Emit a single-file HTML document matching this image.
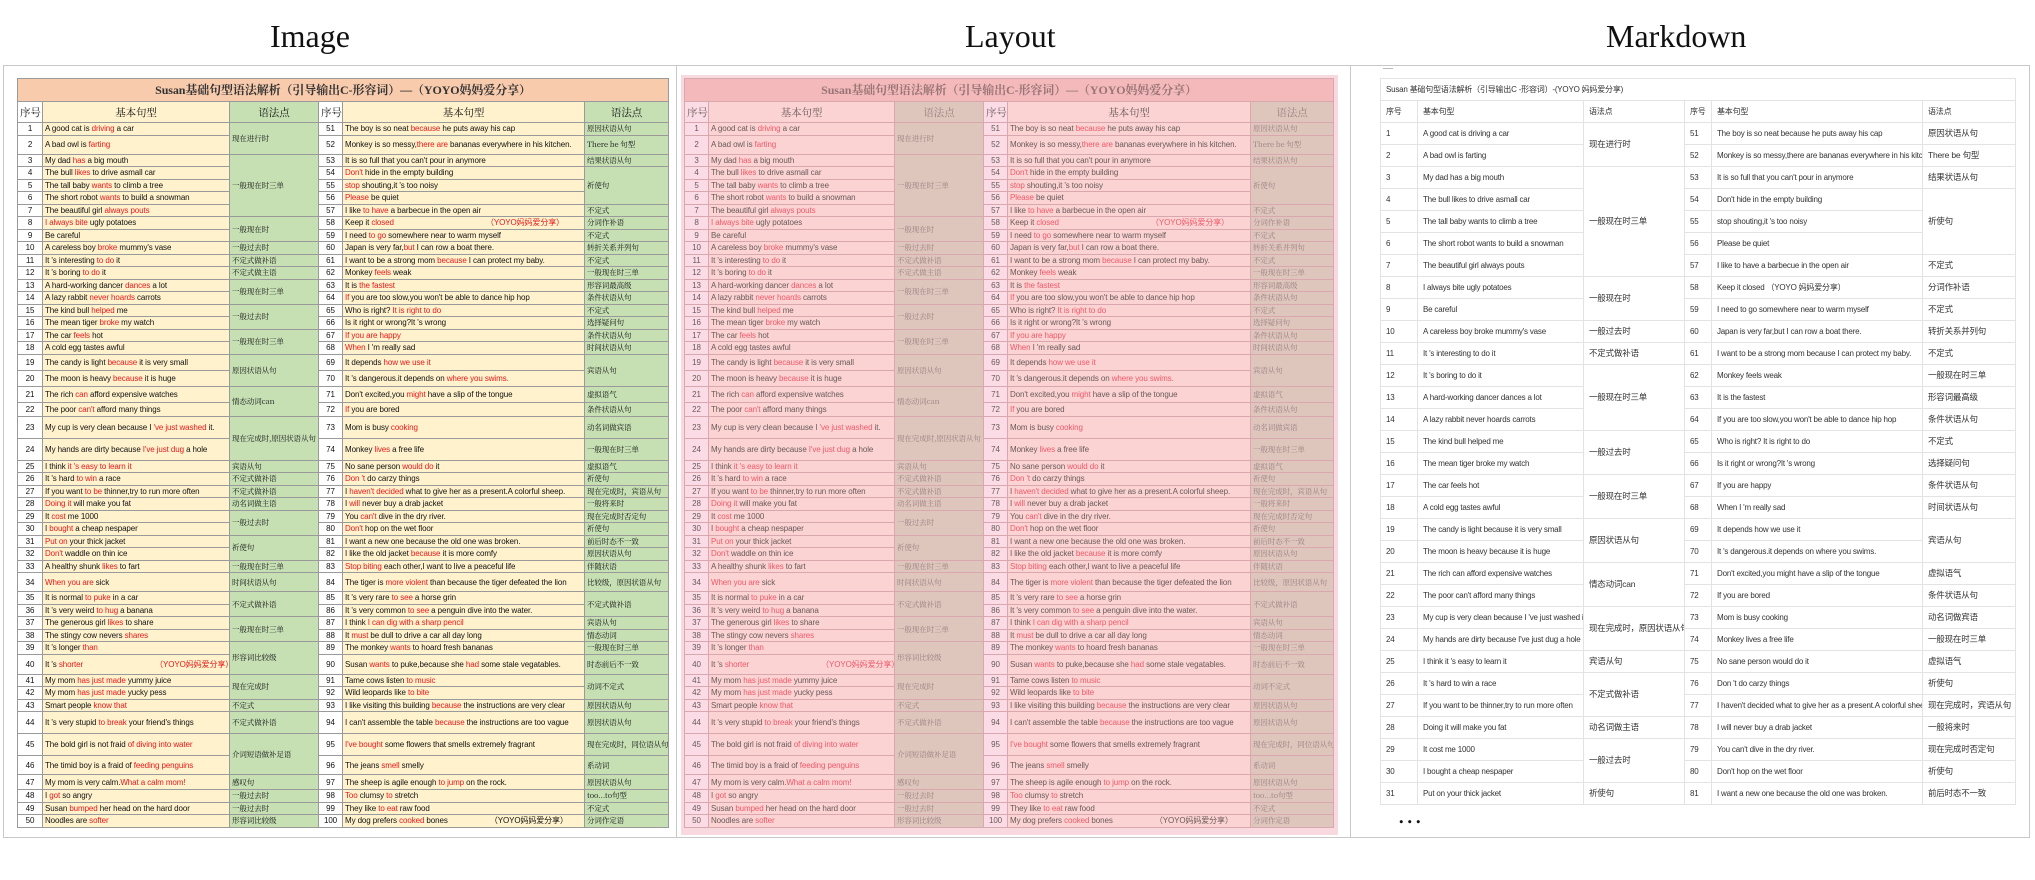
<!DOCTYPE html>
<html><head><meta charset="utf-8">
<style>
*{margin:0;padding:0;box-sizing:border-box}
body{width:2035px;height:880px;background:#fff;position:relative;overflow:hidden;font-family:"Liberation Sans","Noto Sans CJK SC",sans-serif}
.h{position:absolute;top:18px;font-family:"Liberation Serif","Noto Serif CJK SC",serif;font-size:32px;color:#111}
.panel{position:absolute;top:65px;height:773px;border:1px solid #c8c8c8;background:#fff}
table{border-collapse:collapse;table-layout:fixed;position:absolute}
td{overflow:hidden;white-space:nowrap;font-size:8px;line-height:9px;padding:0 2px;vertical-align:middle;letter-spacing:-0.1px}
b{font-weight:normal;color:#e8191b}
.t1 td{border:1px solid #9a9a9a;color:#111}
.t1 .ti{background:#f8cbad;text-align:center;font-size:12px;font-weight:bold;font-family:"Liberation Serif","Noto Serif CJK SC",serif;color:#333}
.t1 .n{background:#fff;text-align:center}
.t1 .s{background:#fff2cc}
.t1 .g{background:#c6e0b4;font-family:"Noto Serif CJK SC",serif;font-size:7.5px}
.t1 .hd{text-align:center;font-size:10.5px;font-family:"Noto Serif CJK SC",serif}
.t2 td{border:1px solid #d9a8ae;color:#6a5a5a}
.t2 b{color:#f05a6a}
.t2 .ti{background:#f3b9bb;text-align:center;font-size:12px;font-weight:bold;font-family:"Liberation Serif","Noto Serif CJK SC",serif;color:#9a7575}
.t2 .n{background:#fadbe6;text-align:center}
.t2 .s{background:#fbd3d3}
.t2 .g{background:#dfc6bd;font-family:"Noto Serif CJK SC",serif;font-size:7.5px;color:#9a8080}
.t2 .hd{text-align:center;font-size:10.5px;font-family:"Noto Serif CJK SC",serif}
.t3 td{border:1px solid #e3e3e3;color:#333;font-size:8px;padding:0 5px;height:22px;letter-spacing:-0.2px}
.t3 .g{font-size:8.5px}
</style></head><body>
<div class="h" style="left:270px">Image</div>
<div class="h" style="left:965px">Layout</div>
<div class="h" style="left:1606px">Markdown</div>

<div class="panel" style="left:3px;width:674px"></div>
<div class="panel" style="left:676px;width:675px"></div>
<div class="panel" style="left:1350px;width:680px"></div>
<div style="position:absolute;left:681px;top:75px;width:657px;height:760px;background:#f9d9e0"></div>

<table class="t1" style="left:17px;top:78px;width:651px">
<colgroup><col style="width:25px"><col style="width:187px"><col style="width:89px"><col style="width:24px"><col style="width:242px"><col style="width:84px"></colgroup>
<tr style="height:23px"><td class="ti" colspan="6">Susan基础句型语法解析（引导输出C-形容词）—（YOYO妈妈爱分享）</td></tr>
<tr style="height:21px"><td class="n hd">序号</td><td class="s hd">基本句型</td><td class="g hd">语法点</td><td class="n hd">序号</td><td class="s hd">基本句型</td><td class="g hd">语法点</td></tr>
<tr style="height:12.5px"><td class="n">1</td><td class="s">A good cat is <b>driving</b> a car</td><td class="g" rowspan="2">现在进行时</td><td class="n">51</td><td class="s">The boy is so neat <b>because</b> he puts away his cap</td><td class="g">原因状语从句</td></tr>
<tr style="height:19px"><td class="n">2</td><td class="s">A bad owl is <b>farting</b></td><td class="n">52</td><td class="s">Monkey is so messy,<b>there are</b> bananas everywhere in his kitchen.</td><td class="g">There be 句型</td></tr>
<tr style="height:12.5px"><td class="n">3</td><td class="s">My dad <b>has</b> a big mouth</td><td class="g" rowspan="5">一般现在时三单</td><td class="n">53</td><td class="s">It is so full that you can't pour in anymore</td><td class="g">结果状语从句</td></tr>
<tr style="height:12.5px"><td class="n">4</td><td class="s">The bull <b>likes</b> to drive asmall car</td><td class="n">54</td><td class="s"><b>Don't</b> hide in the empty building</td><td class="g" rowspan="3">祈使句</td></tr>
<tr style="height:12.5px"><td class="n">5</td><td class="s">The tall baby <b>wants</b> to climb a tree</td><td class="n">55</td><td class="s"><b>stop</b> shouting,it 's too noisy</td></tr>
<tr style="height:12.5px"><td class="n">6</td><td class="s">The short robot <b>wants</b> to build a snowman</td><td class="n">56</td><td class="s"><b>Please</b> be quiet</td></tr>
<tr style="height:12.5px"><td class="n">7</td><td class="s">The beautiful girl <b>always pouts</b></td><td class="n">57</td><td class="s">I like <b>to have</b> a barbecue in the open air</td><td class="g">不定式</td></tr>
<tr style="height:12.5px"><td class="n">8</td><td class="s"><b>I always bite</b> ugly potatoes</td><td class="g" rowspan="2">一般现在时</td><td class="n">58</td><td class="s">Keep it <b>closed</b> <span style="margin-left:90px;color:#e8191b">（YOYO妈妈爱分享）</span></td><td class="g">分词作补语</td></tr>
<tr style="height:12.5px"><td class="n">9</td><td class="s">Be careful</td><td class="n">59</td><td class="s">I need <b>to go</b> somewhere near to warm myself</td><td class="g">不定式</td></tr>
<tr style="height:12.5px"><td class="n">10</td><td class="s">A careless boy <b>broke</b> mummy's vase</td><td class="g">一般过去时</td><td class="n">60</td><td class="s">Japan is very far,<b>but</b> I can row a boat there.</td><td class="g">转折关系并列句</td></tr>
<tr style="height:12.5px"><td class="n">11</td><td class="s">It 's interesting <b>to do</b> it</td><td class="g">不定式做补语</td><td class="n">61</td><td class="s">I want to be a strong mom <b>because</b> I can protect my baby.</td><td class="g">不定式</td></tr>
<tr style="height:12.5px"><td class="n">12</td><td class="s">It 's boring <b>to do</b> it</td><td class="g">不定式做主语</td><td class="n">62</td><td class="s">Monkey <b>feels</b> weak</td><td class="g">一般现在时三单</td></tr>
<tr style="height:12.5px"><td class="n">13</td><td class="s">A hard-working dancer <b>dances</b> a lot</td><td class="g" rowspan="2">一般现在时三单</td><td class="n">63</td><td class="s">It is <b>the fastest</b></td><td class="g">形容词最高级</td></tr>
<tr style="height:12.5px"><td class="n">14</td><td class="s">A lazy rabbit <b>never hoards</b> carrots</td><td class="n">64</td><td class="s"><b>If</b> you are too slow,you won't be able to dance hip hop</td><td class="g">条件状语从句</td></tr>
<tr style="height:12.5px"><td class="n">15</td><td class="s">The kind bull <b>helped</b> me</td><td class="g" rowspan="2">一般过去时</td><td class="n">65</td><td class="s">Who is right? <b>It is right to do</b></td><td class="g">不定式</td></tr>
<tr style="height:12.5px"><td class="n">16</td><td class="s">The mean tiger <b>broke</b> my watch</td><td class="n">66</td><td class="s">Is it right or wrong?It 's wrong</td><td class="g">选择疑问句</td></tr>
<tr style="height:12.5px"><td class="n">17</td><td class="s">The car <b>feels</b> hot</td><td class="g" rowspan="2">一般现在时三单</td><td class="n">67</td><td class="s"><b>If you are happy</b></td><td class="g">条件状语从句</td></tr>
<tr style="height:12.5px"><td class="n">18</td><td class="s">A cold egg tastes awful</td><td class="n">68</td><td class="s"><b>When</b> I 'm really sad</td><td class="g">时间状语从句</td></tr>
<tr style="height:16px"><td class="n">19</td><td class="s">The candy is light <b>because</b> it is very small</td><td class="g" rowspan="2">原因状语从句</td><td class="n">69</td><td class="s">It depends <b>how we use it</b></td><td class="g" rowspan="2">宾语从句</td></tr>
<tr style="height:16px"><td class="n">20</td><td class="s">The moon is heavy <b>because</b> it is huge</td><td class="n">70</td><td class="s">It 's dangerous.it depends on <b>where you swims.</b></td></tr>
<tr style="height:16px"><td class="n">21</td><td class="s">The rich <b>can</b> afford expensive watches</td><td class="g" rowspan="2">情态动词can</td><td class="n">71</td><td class="s">Don't excited,you <b>might</b> have a slip of the tongue</td><td class="g">虚拟语气</td></tr>
<tr style="height:14px"><td class="n">22</td><td class="s">The poor <b>can't</b> afford many things</td><td class="n">72</td><td class="s"><b>If</b> you are bored</td><td class="g">条件状语从句</td></tr>
<tr style="height:22px"><td class="n">23</td><td class="s">My cup is very clean because I <b>'ve just washed</b> it.</td><td class="g" rowspan="2">现在完成时,原因状语从句</td><td class="n">73</td><td class="s">Mom is busy <b>cooking</b></td><td class="g">动名词做宾语</td></tr>
<tr style="height:22px"><td class="n">24</td><td class="s">My hands are dirty because <b>I've just dug</b> a hole</td><td class="n">74</td><td class="s">Monkey <b>lives</b> a free life</td><td class="g">一般现在时三单</td></tr>
<tr style="height:12.5px"><td class="n">25</td><td class="s">I think <b>it 's easy to learn it</b></td><td class="g">宾语从句</td><td class="n">75</td><td class="s">No sane person <b>would do</b> it</td><td class="g">虚拟语气</td></tr>
<tr style="height:12.5px"><td class="n">26</td><td class="s">It 's hard <b>to win</b> a race</td><td class="g">不定式做补语</td><td class="n">76</td><td class="s"><b>Don 't</b> do carzy things</td><td class="g">祈使句</td></tr>
<tr style="height:12.5px"><td class="n">27</td><td class="s">If you want <b>to be</b> thinner,try to run more often</td><td class="g">不定式做补语</td><td class="n">77</td><td class="s">I <b>haven't decided</b> what to give her as a present.A colorful sheep.</td><td class="g">现在完成时，宾语从句</td></tr>
<tr style="height:12.5px"><td class="n">28</td><td class="s"><b>Doing it</b> will make you fat</td><td class="g">动名词做主语</td><td class="n">78</td><td class="s">I <b>will</b> never buy a drab jacket</td><td class="g">一般将来时</td></tr>
<tr style="height:12.5px"><td class="n">29</td><td class="s">It <b>cost</b> me 1000</td><td class="g" rowspan="2">一般过去时</td><td class="n">79</td><td class="s">You <b>can't</b> dive in the dry river.</td><td class="g">现在完成时否定句</td></tr>
<tr style="height:12.5px"><td class="n">30</td><td class="s">I <b>bought</b> a cheap nespaper</td><td class="n">80</td><td class="s"><b>Don't</b> hop on the wet floor</td><td class="g">祈使句</td></tr>
<tr style="height:12.5px"><td class="n">31</td><td class="s"><b>Put on</b> your thick jacket</td><td class="g" rowspan="2">祈使句</td><td class="n">81</td><td class="s">I want a new one because the old one was broken.</td><td class="g">前后时态不一致</td></tr>
<tr style="height:12.5px"><td class="n">32</td><td class="s"><b>Don't</b> waddle on thin ice</td><td class="n">82</td><td class="s">I like the old jacket <b>because</b> it is more comfy</td><td class="g">原因状语从句</td></tr>
<tr style="height:12.5px"><td class="n">33</td><td class="s">A healthy shunk <b>likes</b> to fart</td><td class="g">一般现在时三单</td><td class="n">83</td><td class="s"><b>Stop biting</b> each other,I want to live a peaceful life</td><td class="g">伴随状语</td></tr>
<tr style="height:19px"><td class="n">34</td><td class="s"><b>When you are</b> sick</td><td class="g">时间状语从句</td><td class="n">84</td><td class="s">The tiger is <b>more violent</b> than because the tiger defeated the lion</td><td class="g">比较级，原因状语从句</td></tr>
<tr style="height:12.5px"><td class="n">35</td><td class="s">It is normal <b>to puke</b> in a car</td><td class="g" rowspan="2">不定式做补语</td><td class="n">85</td><td class="s">It 's very rare <b>to see</b> a horse grin</td><td class="g" rowspan="2">不定式做补语</td></tr>
<tr style="height:12.5px"><td class="n">36</td><td class="s">It 's very weird <b>to hug</b> a banana</td><td class="n">86</td><td class="s">It 's very common <b>to see</b> a penguin dive into the water.</td></tr>
<tr style="height:12.5px"><td class="n">37</td><td class="s">The generous girl <b>likes</b> to share</td><td class="g" rowspan="2">一般现在时三单</td><td class="n">87</td><td class="s">I think <b>I can dig with a sharp pencil</b></td><td class="g">宾语从句</td></tr>
<tr style="height:12.5px"><td class="n">38</td><td class="s">The stingy cow nevers <b>shares</b></td><td class="n">88</td><td class="s">It <b>must</b> be dull to drive a car all day long</td><td class="g">情态动词</td></tr>
<tr style="height:12.5px"><td class="n">39</td><td class="s">It 's longer <b>than</b></td><td class="g" rowspan="2">形容词比较级</td><td class="n">89</td><td class="s">The monkey <b>wants</b> to hoard fresh bananas</td><td class="g">一般现在时三单</td></tr>
<tr style="height:20px"><td class="n">40</td><td class="s">It 's <b>shorter</b> <span style="margin-left:70px;color:#e8191b">（YOYO妈妈爱分享）</span></td><td class="n">90</td><td class="s">Susan <b>wants</b> to puke,because she <b>had</b> some stale vegatables.</td><td class="g">时态前后不一致</td></tr>
<tr style="height:12.5px"><td class="n">41</td><td class="s">My mom <b>has just made</b> yummy juice</td><td class="g" rowspan="2">现在完成时</td><td class="n">91</td><td class="s">Tame cows listen <b>to music</b></td><td class="g" rowspan="2">动词不定式</td></tr>
<tr style="height:12.5px"><td class="n">42</td><td class="s">My mom <b>has just made</b> yucky pess</td><td class="n">92</td><td class="s">Wild leopards like <b>to bite</b></td></tr>
<tr style="height:12.5px"><td class="n">43</td><td class="s">Smart people <b>know that</b></td><td class="g">不定式</td><td class="n">93</td><td class="s">I like visiting this building <b>because</b> the instructions are very clear</td><td class="g">原因状语从句</td></tr>
<tr style="height:22px"><td class="n">44</td><td class="s">It 's very stupid <b>to break</b> your friend's things</td><td class="g">不定式做补语</td><td class="n">94</td><td class="s">I can't assemble the table <b>because</b> the instructions are too vague</td><td class="g">原因状语从句</td></tr>
<tr style="height:22px"><td class="n">45</td><td class="s">The bold girl is not fraid <b>of diving into water</b></td><td class="g" rowspan="2">介词短语做补足语</td><td class="n">95</td><td class="s"><b>I've bought</b> some flowers that smells extremely fragrant</td><td class="g">现在完成时，同位语从句</td></tr>
<tr style="height:19px"><td class="n">46</td><td class="s">The timid boy is a fraid of <b>feeding penguins</b></td><td class="n">96</td><td class="s">The jeans <b>smell</b> smelly</td><td class="g">系动词</td></tr>
<tr style="height:15px"><td class="n">47</td><td class="s">My mom is very calm.<b>What a calm mom!</b></td><td class="g">感叹句</td><td class="n">97</td><td class="s">The sheep is agile enough <b>to jump</b> on the rock.</td><td class="g">原因状语从句</td></tr>
<tr style="height:12.5px"><td class="n">48</td><td class="s">I <b>got</b> so angry</td><td class="g">一般过去时</td><td class="n">98</td><td class="s"><b>Too</b> clumsy <b>to</b> stretch</td><td class="g">too...to句型</td></tr>
<tr style="height:12.5px"><td class="n">49</td><td class="s">Susan <b>bumped</b> her head on the hard door</td><td class="g">一般过去时</td><td class="n">99</td><td class="s">They like <b>to eat</b> raw food</td><td class="g">不定式</td></tr>
<tr style="height:12.5px"><td class="n">50</td><td class="s">Noodles are <b>softer</b></td><td class="g">形容词比较级</td><td class="n">100</td><td class="s">My dog prefers <b>cooked</b> bones <span style="margin-left:40px">（YOYO妈妈爱分享）</span></td><td class="g">分词作定语</td></tr>
</table>

<table class="t2" style="left:684px;top:78px;width:649px">
<colgroup><col style="width:24px"><col style="width:186px"><col style="width:89px"><col style="width:24px"><col style="width:243px"><col style="width:83px"></colgroup>
<tr style="height:23px"><td class="ti" colspan="6">Susan基础句型语法解析（引导输出C-形容词）—（YOYO妈妈爱分享）</td></tr>
<tr style="height:21px"><td class="n hd">序号</td><td class="s hd">基本句型</td><td class="g hd">语法点</td><td class="n hd">序号</td><td class="s hd">基本句型</td><td class="g hd">语法点</td></tr>
<tr style="height:12.5px"><td class="n">1</td><td class="s">A good cat is <b>driving</b> a car</td><td class="g" rowspan="2">现在进行时</td><td class="n">51</td><td class="s">The boy is so neat <b>because</b> he puts away his cap</td><td class="g">原因状语从句</td></tr>
<tr style="height:19px"><td class="n">2</td><td class="s">A bad owl is <b>farting</b></td><td class="n">52</td><td class="s">Monkey is so messy,<b>there are</b> bananas everywhere in his kitchen.</td><td class="g">There be 句型</td></tr>
<tr style="height:12.5px"><td class="n">3</td><td class="s">My dad <b>has</b> a big mouth</td><td class="g" rowspan="5">一般现在时三单</td><td class="n">53</td><td class="s">It is so full that you can't pour in anymore</td><td class="g">结果状语从句</td></tr>
<tr style="height:12.5px"><td class="n">4</td><td class="s">The bull <b>likes</b> to drive asmall car</td><td class="n">54</td><td class="s"><b>Don't</b> hide in the empty building</td><td class="g" rowspan="3">祈使句</td></tr>
<tr style="height:12.5px"><td class="n">5</td><td class="s">The tall baby <b>wants</b> to climb a tree</td><td class="n">55</td><td class="s"><b>stop</b> shouting,it 's too noisy</td></tr>
<tr style="height:12.5px"><td class="n">6</td><td class="s">The short robot <b>wants</b> to build a snowman</td><td class="n">56</td><td class="s"><b>Please</b> be quiet</td></tr>
<tr style="height:12.5px"><td class="n">7</td><td class="s">The beautiful girl <b>always pouts</b></td><td class="n">57</td><td class="s">I like <b>to have</b> a barbecue in the open air</td><td class="g">不定式</td></tr>
<tr style="height:12.5px"><td class="n">8</td><td class="s"><b>I always bite</b> ugly potatoes</td><td class="g" rowspan="2">一般现在时</td><td class="n">58</td><td class="s">Keep it <b>closed</b> <span style="margin-left:90px;color:#f05a6a">（YOYO妈妈爱分享）</span></td><td class="g">分词作补语</td></tr>
<tr style="height:12.5px"><td class="n">9</td><td class="s">Be careful</td><td class="n">59</td><td class="s">I need <b>to go</b> somewhere near to warm myself</td><td class="g">不定式</td></tr>
<tr style="height:12.5px"><td class="n">10</td><td class="s">A careless boy <b>broke</b> mummy's vase</td><td class="g">一般过去时</td><td class="n">60</td><td class="s">Japan is very far,<b>but</b> I can row a boat there.</td><td class="g">转折关系并列句</td></tr>
<tr style="height:12.5px"><td class="n">11</td><td class="s">It 's interesting <b>to do</b> it</td><td class="g">不定式做补语</td><td class="n">61</td><td class="s">I want to be a strong mom <b>because</b> I can protect my baby.</td><td class="g">不定式</td></tr>
<tr style="height:12.5px"><td class="n">12</td><td class="s">It 's boring <b>to do</b> it</td><td class="g">不定式做主语</td><td class="n">62</td><td class="s">Monkey <b>feels</b> weak</td><td class="g">一般现在时三单</td></tr>
<tr style="height:12.5px"><td class="n">13</td><td class="s">A hard-working dancer <b>dances</b> a lot</td><td class="g" rowspan="2">一般现在时三单</td><td class="n">63</td><td class="s">It is <b>the fastest</b></td><td class="g">形容词最高级</td></tr>
<tr style="height:12.5px"><td class="n">14</td><td class="s">A lazy rabbit <b>never hoards</b> carrots</td><td class="n">64</td><td class="s"><b>If</b> you are too slow,you won't be able to dance hip hop</td><td class="g">条件状语从句</td></tr>
<tr style="height:12.5px"><td class="n">15</td><td class="s">The kind bull <b>helped</b> me</td><td class="g" rowspan="2">一般过去时</td><td class="n">65</td><td class="s">Who is right? <b>It is right to do</b></td><td class="g">不定式</td></tr>
<tr style="height:12.5px"><td class="n">16</td><td class="s">The mean tiger <b>broke</b> my watch</td><td class="n">66</td><td class="s">Is it right or wrong?It 's wrong</td><td class="g">选择疑问句</td></tr>
<tr style="height:12.5px"><td class="n">17</td><td class="s">The car <b>feels</b> hot</td><td class="g" rowspan="2">一般现在时三单</td><td class="n">67</td><td class="s"><b>If you are happy</b></td><td class="g">条件状语从句</td></tr>
<tr style="height:12.5px"><td class="n">18</td><td class="s">A cold egg tastes awful</td><td class="n">68</td><td class="s"><b>When</b> I 'm really sad</td><td class="g">时间状语从句</td></tr>
<tr style="height:16px"><td class="n">19</td><td class="s">The candy is light <b>because</b> it is very small</td><td class="g" rowspan="2">原因状语从句</td><td class="n">69</td><td class="s">It depends <b>how we use it</b></td><td class="g" rowspan="2">宾语从句</td></tr>
<tr style="height:16px"><td class="n">20</td><td class="s">The moon is heavy <b>because</b> it is huge</td><td class="n">70</td><td class="s">It 's dangerous.it depends on <b>where you swims.</b></td></tr>
<tr style="height:16px"><td class="n">21</td><td class="s">The rich <b>can</b> afford expensive watches</td><td class="g" rowspan="2">情态动词can</td><td class="n">71</td><td class="s">Don't excited,you <b>might</b> have a slip of the tongue</td><td class="g">虚拟语气</td></tr>
<tr style="height:14px"><td class="n">22</td><td class="s">The poor <b>can't</b> afford many things</td><td class="n">72</td><td class="s"><b>If</b> you are bored</td><td class="g">条件状语从句</td></tr>
<tr style="height:22px"><td class="n">23</td><td class="s">My cup is very clean because I <b>'ve just washed</b> it.</td><td class="g" rowspan="2">现在完成时,原因状语从句</td><td class="n">73</td><td class="s">Mom is busy <b>cooking</b></td><td class="g">动名词做宾语</td></tr>
<tr style="height:22px"><td class="n">24</td><td class="s">My hands are dirty because <b>I've just dug</b> a hole</td><td class="n">74</td><td class="s">Monkey <b>lives</b> a free life</td><td class="g">一般现在时三单</td></tr>
<tr style="height:12.5px"><td class="n">25</td><td class="s">I think <b>it 's easy to learn it</b></td><td class="g">宾语从句</td><td class="n">75</td><td class="s">No sane person <b>would do</b> it</td><td class="g">虚拟语气</td></tr>
<tr style="height:12.5px"><td class="n">26</td><td class="s">It 's hard <b>to win</b> a race</td><td class="g">不定式做补语</td><td class="n">76</td><td class="s"><b>Don 't</b> do carzy things</td><td class="g">祈使句</td></tr>
<tr style="height:12.5px"><td class="n">27</td><td class="s">If you want <b>to be</b> thinner,try to run more often</td><td class="g">不定式做补语</td><td class="n">77</td><td class="s">I <b>haven't decided</b> what to give her as a present.A colorful sheep.</td><td class="g">现在完成时，宾语从句</td></tr>
<tr style="height:12.5px"><td class="n">28</td><td class="s"><b>Doing it</b> will make you fat</td><td class="g">动名词做主语</td><td class="n">78</td><td class="s">I <b>will</b> never buy a drab jacket</td><td class="g">一般将来时</td></tr>
<tr style="height:12.5px"><td class="n">29</td><td class="s">It <b>cost</b> me 1000</td><td class="g" rowspan="2">一般过去时</td><td class="n">79</td><td class="s">You <b>can't</b> dive in the dry river.</td><td class="g">现在完成时否定句</td></tr>
<tr style="height:12.5px"><td class="n">30</td><td class="s">I <b>bought</b> a cheap nespaper</td><td class="n">80</td><td class="s"><b>Don't</b> hop on the wet floor</td><td class="g">祈使句</td></tr>
<tr style="height:12.5px"><td class="n">31</td><td class="s"><b>Put on</b> your thick jacket</td><td class="g" rowspan="2">祈使句</td><td class="n">81</td><td class="s">I want a new one because the old one was broken.</td><td class="g">前后时态不一致</td></tr>
<tr style="height:12.5px"><td class="n">32</td><td class="s"><b>Don't</b> waddle on thin ice</td><td class="n">82</td><td class="s">I like the old jacket <b>because</b> it is more comfy</td><td class="g">原因状语从句</td></tr>
<tr style="height:12.5px"><td class="n">33</td><td class="s">A healthy shunk <b>likes</b> to fart</td><td class="g">一般现在时三单</td><td class="n">83</td><td class="s"><b>Stop biting</b> each other,I want to live a peaceful life</td><td class="g">伴随状语</td></tr>
<tr style="height:19px"><td class="n">34</td><td class="s"><b>When you are</b> sick</td><td class="g">时间状语从句</td><td class="n">84</td><td class="s">The tiger is <b>more violent</b> than because the tiger defeated the lion</td><td class="g">比较级，原因状语从句</td></tr>
<tr style="height:12.5px"><td class="n">35</td><td class="s">It is normal <b>to puke</b> in a car</td><td class="g" rowspan="2">不定式做补语</td><td class="n">85</td><td class="s">It 's very rare <b>to see</b> a horse grin</td><td class="g" rowspan="2">不定式做补语</td></tr>
<tr style="height:12.5px"><td class="n">36</td><td class="s">It 's very weird <b>to hug</b> a banana</td><td class="n">86</td><td class="s">It 's very common <b>to see</b> a penguin dive into the water.</td></tr>
<tr style="height:12.5px"><td class="n">37</td><td class="s">The generous girl <b>likes</b> to share</td><td class="g" rowspan="2">一般现在时三单</td><td class="n">87</td><td class="s">I think <b>I can dig with a sharp pencil</b></td><td class="g">宾语从句</td></tr>
<tr style="height:12.5px"><td class="n">38</td><td class="s">The stingy cow nevers <b>shares</b></td><td class="n">88</td><td class="s">It <b>must</b> be dull to drive a car all day long</td><td class="g">情态动词</td></tr>
<tr style="height:12.5px"><td class="n">39</td><td class="s">It 's longer <b>than</b></td><td class="g" rowspan="2">形容词比较级</td><td class="n">89</td><td class="s">The monkey <b>wants</b> to hoard fresh bananas</td><td class="g">一般现在时三单</td></tr>
<tr style="height:20px"><td class="n">40</td><td class="s">It 's <b>shorter</b> <span style="margin-left:70px;color:#f05a6a">（YOYO妈妈爱分享）</span></td><td class="n">90</td><td class="s">Susan <b>wants</b> to puke,because she <b>had</b> some stale vegatables.</td><td class="g">时态前后不一致</td></tr>
<tr style="height:12.5px"><td class="n">41</td><td class="s">My mom <b>has just made</b> yummy juice</td><td class="g" rowspan="2">现在完成时</td><td class="n">91</td><td class="s">Tame cows listen <b>to music</b></td><td class="g" rowspan="2">动词不定式</td></tr>
<tr style="height:12.5px"><td class="n">42</td><td class="s">My mom <b>has just made</b> yucky pess</td><td class="n">92</td><td class="s">Wild leopards like <b>to bite</b></td></tr>
<tr style="height:12.5px"><td class="n">43</td><td class="s">Smart people <b>know that</b></td><td class="g">不定式</td><td class="n">93</td><td class="s">I like visiting this building <b>because</b> the instructions are very clear</td><td class="g">原因状语从句</td></tr>
<tr style="height:22px"><td class="n">44</td><td class="s">It 's very stupid <b>to break</b> your friend's things</td><td class="g">不定式做补语</td><td class="n">94</td><td class="s">I can't assemble the table <b>because</b> the instructions are too vague</td><td class="g">原因状语从句</td></tr>
<tr style="height:22px"><td class="n">45</td><td class="s">The bold girl is not fraid <b>of diving into water</b></td><td class="g" rowspan="2">介词短语做补足语</td><td class="n">95</td><td class="s"><b>I've bought</b> some flowers that smells extremely fragrant</td><td class="g">现在完成时，同位语从句</td></tr>
<tr style="height:19px"><td class="n">46</td><td class="s">The timid boy is a fraid of <b>feeding penguins</b></td><td class="n">96</td><td class="s">The jeans <b>smell</b> smelly</td><td class="g">系动词</td></tr>
<tr style="height:15px"><td class="n">47</td><td class="s">My mom is very calm.<b>What a calm mom!</b></td><td class="g">感叹句</td><td class="n">97</td><td class="s">The sheep is agile enough <b>to jump</b> on the rock.</td><td class="g">原因状语从句</td></tr>
<tr style="height:12.5px"><td class="n">48</td><td class="s">I <b>got</b> so angry</td><td class="g">一般过去时</td><td class="n">98</td><td class="s"><b>Too</b> clumsy <b>to</b> stretch</td><td class="g">too...to句型</td></tr>
<tr style="height:12.5px"><td class="n">49</td><td class="s">Susan <b>bumped</b> her head on the hard door</td><td class="g">一般过去时</td><td class="n">99</td><td class="s">They like <b>to eat</b> raw food</td><td class="g">不定式</td></tr>
<tr style="height:12.5px"><td class="n">50</td><td class="s">Noodles are <b>softer</b></td><td class="g">形容词比较级</td><td class="n">100</td><td class="s">My dog prefers <b>cooked</b> bones <span style="margin-left:40px">（YOYO妈妈爱分享）</span></td><td class="g">分词作定语</td></tr>
</table>

<div style="position:absolute;left:1383px;top:68px;width:10px;height:1px;background:#bbb"></div>
<table class="t3" style="left:1380px;top:78px;width:635px">
<colgroup><col style="width:37px"><col style="width:166px"><col style="width:101px"><col style="width:27px"><col style="width:211px"><col style="width:93px"></colgroup>
<tr><td colspan="6">Susan 基础句型语法解析（引导输出C -形容词）-(YOYO 妈妈爱分享)</td></tr>
<tr><td>序号</td><td>基本句型</td><td>语法点</td><td>序号</td><td>基本句型</td><td>语法点</td></tr>
<tr><td>1</td><td>A good cat is driving a car</td><td class="g" rowspan="2">现在进行时</td><td>51</td><td>The boy is so neat because he puts away his cap</td><td class="g">原因状语从句</td></tr>
<tr><td>2</td><td>A bad owl is farting</td><td>52</td><td>Monkey is so messy,there are bananas everywhere in his kitchen.</td><td class="g">There be 句型</td></tr>
<tr><td>3</td><td>My dad has a big mouth</td><td class="g" rowspan="5">一般现在时三单</td><td>53</td><td>It is so full that you can't pour in anymore</td><td class="g">结果状语从句</td></tr>
<tr><td>4</td><td>The bull likes to drive asmall car</td><td>54</td><td>Don't hide in the empty building</td><td class="g" rowspan="3">祈使句</td></tr>
<tr><td>5</td><td>The tall baby wants to climb a tree</td><td>55</td><td>stop shouting,it 's too noisy</td></tr>
<tr><td>6</td><td>The short robot wants to build a snowman</td><td>56</td><td>Please be quiet</td></tr>
<tr><td>7</td><td>The beautiful girl always pouts</td><td>57</td><td>I like to have a barbecue in the open air</td><td class="g">不定式</td></tr>
<tr><td>8</td><td>I always bite ugly potatoes</td><td class="g" rowspan="2">一般现在时</td><td>58</td><td>Keep it closed （YOYO 妈妈爱分享）</td><td class="g">分词作补语</td></tr>
<tr><td>9</td><td>Be careful</td><td>59</td><td>I need to go somewhere near to warm myself</td><td class="g">不定式</td></tr>
<tr><td>10</td><td>A careless boy broke mummy's vase</td><td class="g">一般过去时</td><td>60</td><td>Japan is very far,but I can row a boat there.</td><td class="g">转折关系并列句</td></tr>
<tr><td>11</td><td>It 's interesting to do it</td><td class="g">不定式做补语</td><td>61</td><td>I want to be a strong mom because I can protect my baby.</td><td class="g">不定式</td></tr>
<tr><td>12</td><td>It 's boring to do it</td><td class="g" rowspan="3">一般现在时三单</td><td>62</td><td>Monkey feels weak</td><td class="g">一般现在时三单</td></tr>
<tr><td>13</td><td>A hard-working dancer dances a lot</td><td>63</td><td>It is the fastest</td><td class="g">形容词最高级</td></tr>
<tr><td>14</td><td>A lazy rabbit never hoards carrots</td><td>64</td><td>If you are too slow,you won't be able to dance hip hop</td><td class="g">条件状语从句</td></tr>
<tr><td>15</td><td>The kind bull helped me</td><td class="g" rowspan="2">一般过去时</td><td>65</td><td>Who is right? It is right to do</td><td class="g">不定式</td></tr>
<tr><td>16</td><td>The mean tiger broke my watch</td><td>66</td><td>Is it right or wrong?It 's wrong</td><td class="g">选择疑问句</td></tr>
<tr><td>17</td><td>The car feels hot</td><td class="g" rowspan="2">一般现在时三单</td><td>67</td><td>If you are happy</td><td class="g">条件状语从句</td></tr>
<tr><td>18</td><td>A cold egg tastes awful</td><td>68</td><td>When I 'm really sad</td><td class="g">时间状语从句</td></tr>
<tr><td>19</td><td>The candy is light because it is very small</td><td class="g" rowspan="2">原因状语从句</td><td>69</td><td>It depends how we use it</td><td class="g" rowspan="2">宾语从句</td></tr>
<tr><td>20</td><td>The moon is heavy because it is huge</td><td>70</td><td>It 's dangerous.it depends on where you swims.</td></tr>
<tr><td>21</td><td>The rich can afford expensive watches</td><td class="g" rowspan="2">情态动词can</td><td>71</td><td>Don't excited,you might have a slip of the tongue</td><td class="g">虚拟语气</td></tr>
<tr><td>22</td><td>The poor can't afford many things</td><td>72</td><td>If you are bored</td><td class="g">条件状语从句</td></tr>
<tr><td>23</td><td>My cup is very clean because I 've just washed it.</td><td class="g" rowspan="2">现在完成时，原因状语从句</td><td>73</td><td>Mom is busy cooking</td><td class="g">动名词做宾语</td></tr>
<tr><td>24</td><td>My hands are dirty because I've just dug a hole</td><td>74</td><td>Monkey lives a free life</td><td class="g">一般现在时三单</td></tr>
<tr><td>25</td><td>I think it 's easy to learn it</td><td class="g">宾语从句</td><td>75</td><td>No sane person would do it</td><td class="g">虚拟语气</td></tr>
<tr><td>26</td><td>It 's hard to win a race</td><td class="g" rowspan="2">不定式做补语</td><td>76</td><td>Don 't do carzy things</td><td class="g">祈使句</td></tr>
<tr><td>27</td><td>If you want to be thinner,try to run more often</td><td>77</td><td>I haven't decided what to give her as a present.A colorful sheep.</td><td class="g">现在完成时，宾语从句</td></tr>
<tr><td>28</td><td>Doing it will make you fat</td><td class="g">动名词做主语</td><td>78</td><td>I will never buy a drab jacket</td><td class="g">一般将来时</td></tr>
<tr><td>29</td><td>It cost me 1000</td><td class="g" rowspan="2">一般过去时</td><td>79</td><td>You can't dive in the dry river.</td><td class="g">现在完成时否定句</td></tr>
<tr><td>30</td><td>I bought a cheap nespaper</td><td>80</td><td>Don't hop on the wet floor</td><td class="g">祈使句</td></tr>
<tr><td>31</td><td>Put on your thick jacket</td><td class="g">祈使句</td><td>81</td><td>I want a new one because the old one was broken.</td><td class="g">前后时态不一致</td></tr>
</table>
<div style="position:absolute;left:1398px;top:800px;font-size:26px;color:#111;font-family:'Liberation Serif',serif;letter-spacing:2px">...</div>
</body></html>
